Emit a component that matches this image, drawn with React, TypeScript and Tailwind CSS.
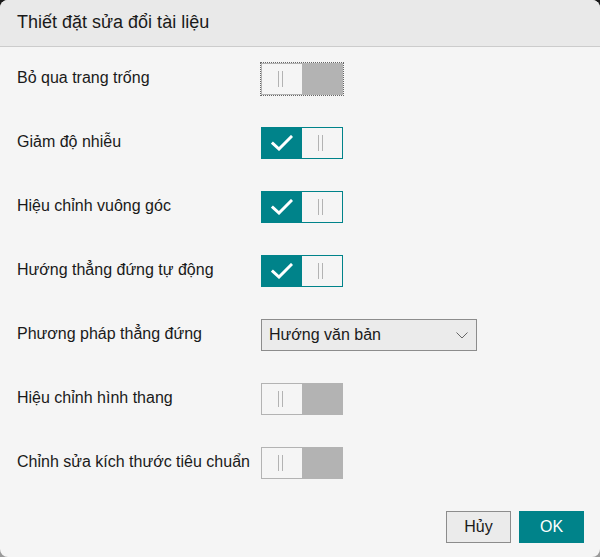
import { useState } from 'react';

type Row = { label: string; kind: 'toggle' | 'select'; on?: boolean; focused?: boolean };

const rows: Row[] = [
  { label: 'Bỏ qua trang trống', kind: 'toggle', on: false, focused: true },
  { label: 'Giảm độ nhiễu', kind: 'toggle', on: true },
  { label: 'Hiệu chỉnh vuông góc', kind: 'toggle', on: true },
  { label: 'Hướng thẳng đứng tự động', kind: 'toggle', on: true },
  { label: 'Phương pháp thẳng đứng', kind: 'select' },
  { label: 'Hiệu chỉnh hình thang', kind: 'toggle', on: false },
  { label: 'Chỉnh sửa kích thước tiêu chuẩn', kind: 'toggle', on: false },
];

const Grip = () => (
  <div className="flex gap-[3px] h-4 mr-[3px]">
    <span className="w-px h-full bg-[#b3b3b3]" />
    <span className="w-px h-full bg-[#b3b3b3]" />
  </div>
);

const Toggle = ({ on, focused }: { on: boolean; focused?: boolean }) => (
  <div
    className={`w-[82px] h-8 flex border ${
      on ? 'border-[#00838a]' : 'border-[#b3b3b3]'
    } ${focused ? 'outline outline-1 outline-dotted outline-[#666] outline-offset-0' : ''}`}
  >
    {on ? (
      <>
        <div className="w-[40px] h-full bg-[#00838a] flex items-center justify-center">
          <svg width="22" height="16" viewBox="0 0 22 16" fill="none">
            <path d="M2 8.5 L8 14 L20 2" stroke="white" strokeWidth="3" strokeLinecap="square" />
          </svg>
        </div>
        <div className="flex-1 h-full bg-[#f5f5f5] flex items-center justify-center">
          <Grip />
        </div>
      </>
    ) : (
      <>
        <div className="w-[40px] h-full bg-[#f5f5f5] flex items-center justify-center">
          <Grip />
        </div>
        <div className="flex-1 h-full bg-[#b3b3b3]" />
      </>
    )}
  </div>
);

const App = () => {
  const [method] = useState('Hướng văn bản');

  return (
    <div
      className="w-[600px] h-[557px] bg-gradient-to-b from-[#1a1a1a] to-[#9a9a9a]"
      style={{ fontFamily: '"Liberation Sans", Arial, sans-serif' }}
    >
      <div className="w-full h-full rounded-lg overflow-hidden bg-[#f5f5f5] flex flex-col text-[#1a1a1a]">
        {/* Header */}
        <div className="h-[47px] shrink-0 bg-[#e9e9e9] border-b border-[#cccccc] flex items-center px-[17px]">
          <h1 className="text-[18px] leading-none pb-[2px]">Thiết đặt sửa đổi tài liệu</h1>
        </div>

        {/* Settings */}
        <div className="flex flex-col gap-8 pt-4 pl-[17px]">
          {rows.map((row) => (
            <div key={row.label} className="flex items-center h-8">
              <span className="w-[244px] text-[16px] leading-none -mt-[3px] whitespace-nowrap">
                {row.label}
              </span>
              {row.kind === 'toggle' ? (
                <Toggle on={!!row.on} focused={row.focused} />
              ) : (
                <div className="w-[216px] h-8 bg-[#ebebeb] border border-[#8c8c8c] flex items-center justify-between pl-[7px] pr-[8px]">
                  <span className="text-[16px] leading-none -mt-[1px]">{method}</span>
                  <svg width="12" height="7" viewBox="0 0 12 7" fill="none">
                    <path d="M0.5 0.5 L6 6 L11.5 0.5" stroke="#666" strokeWidth="1" />
                  </svg>
                </div>
              )}
            </div>
          ))}
        </div>

        {/* Footer */}
        <div className="mt-8 flex justify-end gap-2 pr-4">
          <button className="w-[65px] h-8 bg-[#ebebeb] border border-[#8c8c8c] text-[16px] text-[#1a1a1a]">
            Hủy
          </button>
          <button className="w-[65px] h-8 bg-[#00838a] text-white text-[16px]">OK</button>
        </div>
      </div>
    </div>
  );
};

export default App;
